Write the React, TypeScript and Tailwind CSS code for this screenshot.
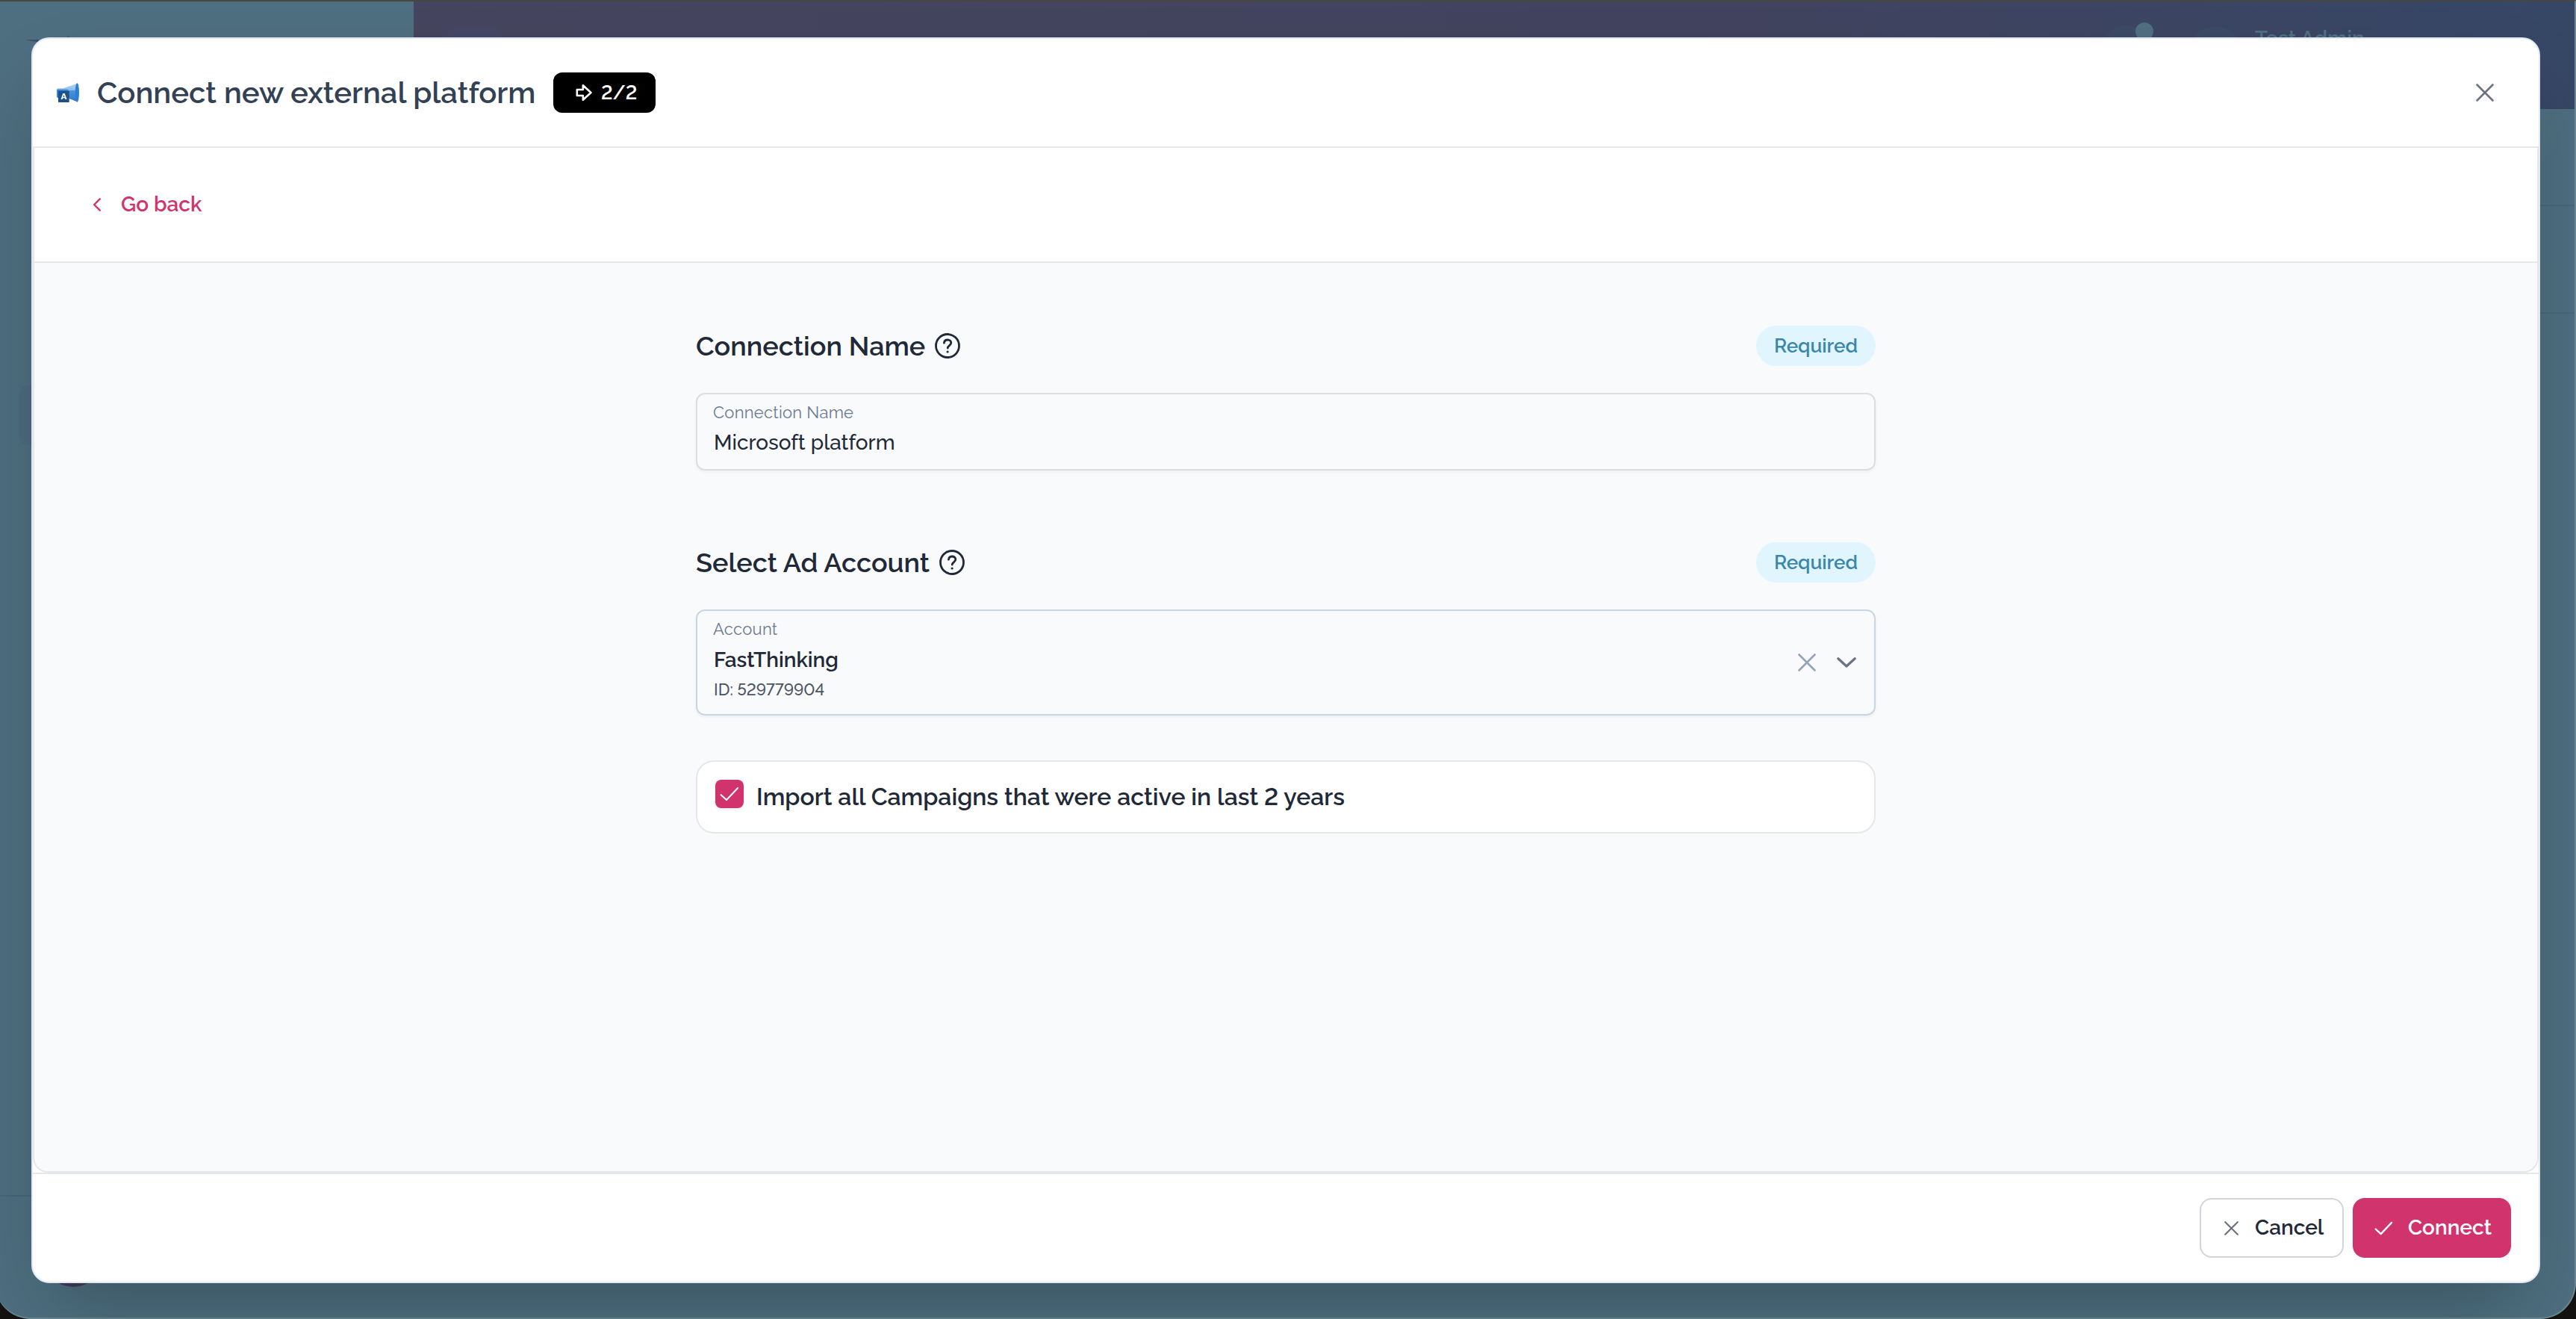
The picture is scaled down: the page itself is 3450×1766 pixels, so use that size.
import { useState, type ReactNode } from "react";

interface FieldHeaderProps {
  title: string;
}

interface IconProps {
  className?: string;
  strokeWidth?: number;
}

const CloseIcon = ({ className, strokeWidth = 2.8 }: IconProps) => (
  <svg viewBox="0 0 24 24" fill="none" className={className}>
    <path
      d="M1.5 1.5 22.5 22.5M22.5 1.5 1.5 22.5"
      stroke="currentColor"
      strokeWidth={strokeWidth}
      strokeLinecap="round"
    />
  </svg>
);

const CheckIcon = ({ className, strokeWidth = 2.4 }: IconProps) => (
  <svg viewBox="0 0 26 20" fill="none" className={className}>
    <path
      d="M1.6 11.2 9 18 24.2 2"
      stroke="currentColor"
      strokeWidth={strokeWidth}
      strokeLinecap="round"
      strokeLinejoin="round"
    />
  </svg>
);

const HelpIcon = () => (
  <svg viewBox="0 0 34 34" fill="none" className="w-[34px] h-[34px] shrink-0">
    <circle cx="17" cy="17" r="15.5" stroke="currentColor" strokeWidth="2.8" />
    <path
      d="M12.4 13.2c.3-2.6 2.2-4.2 4.7-4.2 2.7 0 4.7 1.7 4.7 4.1 0 3.3-4.6 3.6-4.6 7"
      stroke="currentColor"
      strokeWidth="2.8"
      strokeLinecap="round"
    />
    <circle cx="17.1" cy="25" r="1.6" fill="currentColor" />
  </svg>
);

const MegaphoneIcon = () => (
  <svg viewBox="0 0 90 78" className="w-[30px] h-[26px] shrink-0">
    <defs>
      <linearGradient id="cone" x1="0" y1="0" x2="0" y2="1">
        <stop offset="0" stopColor="#b5d6f3" />
        <stop offset="0.38" stopColor="#8bbcec" />
        <stop offset="0.4" stopColor="#4b93de" />
        <stop offset="1" stopColor="#2f78c6" />
      </linearGradient>
    </defs>
    <path d="M4 22h22L82 2v74L48 62 4 58a8 8 0 0 1-4-8V28a6 6 0 0 1 4-6z" fill="url(#cone)" />
    <path d="M2 26h44v34H4a6 6 0 0 1-4-6V30z" fill="#3a85d4" />
    <ellipse cx="82" cy="39" rx="8" ry="38" fill="#2f7fd0" />
    <rect x="6" y="32" width="44" height="46" rx="2" fill="#1f5189" />
    <text
      x="28"
      y="67"
      textAnchor="middle"
      fontSize="34"
      fontWeight="700"
      fill="#fff"
      className="font-['Open_Sans',sans-serif]"
    >
      A
    </text>
  </svg>
);

const FieldHeader = ({ title }: FieldHeaderProps) => (
  <div className="flex items-center justify-between h-[54px]">
    <div className="flex items-center gap-[13px] text-[#1f2937]">
      <h2 className="text-[36px] leading-[54px] font-semibold">{title}</h2>
      <HelpIcon />
    </div>
    <span className="w-[160px] h-[54px] rounded-full bg-[#e1f5fe] text-[#3a87ad] text-[26px] leading-[54px] font-semibold text-center">
      Required
    </span>
  </div>
);

const FieldLabel = ({ children }: { children: ReactNode }) => (
  <p className="text-[22px] leading-[28px] tracking-[0.25px] text-[#6b7a90]">
    {children}
  </p>
);

// dimmed application shell behind the dialog
const Backdrop = () => (
  <div className="absolute inset-y-0 -left-[7px] right-0 flex overflow-hidden rounded-b-[48px] bg-[#4e6f80] border-t-2 border-t-[#464642] border-r-2 border-r-[#70868f] border-b-2 border-b-[#6c8a92]">
    <div className="w-[561px] shrink-0 flex flex-col pl-[7px]">
      <svg viewBox="0 0 120 20" className="w-[120px] h-[20px] mt-[42px]">
        <path d="M32 9.3h20v3z" fill="#45455f" />
        <path
          d="M86 9l6-4M98 9l4-1M106 8l4-1M111 6l1 1M115 6l1 1"
          stroke="#41495f"
          strokeWidth="1.4"
        />
      </svg>
      <div className="ml-[26px] mt-[452px] w-[500px] h-[80px] rounded-[12px] bg-[#4d6a7d]" />
      <div className="mt-[1004px] h-[2px] bg-[#46667a]" />
      <div className="ml-[56px] mt-[37px] w-[84px] h-[84px] rounded-full bg-[#403c58]" />
    </div>
    <div className="flex-1">
      <div className="flex h-[144px] pl-[43px] bg-linear-to-r from-[#46455f] via-[#42445f] via-60% to-[#364766]">
        <div className="mt-[34px] w-[75px] h-[75px] rounded-[16px] bg-[#454865]" />
        <div className="relative ml-auto mt-[32px] w-[76px] h-[76px] rounded-full bg-[#3b4a66]">
          <span className="absolute left-[50px] -top-[4px] size-[24px] rounded-full bg-[#4e7080]" />
        </div>
        <div className="ml-[45px] mt-[33px] w-[72px] h-[76px] rounded-full bg-[#3b4a66]" />
        <p className="ml-[17px] mt-[30px] w-[428px] text-[28px] leading-[40px] font-semibold text-[#4e7080]">
          Test Admin
        </p>
      </div>
      <div className="mt-[128px] h-[2px] bg-[#48687a]" />
      <div className="mt-[142px] h-[2px] bg-[#48687a]" />
    </div>
  </div>
);

const App = () => {
  const [connectionName, setConnectionName] = useState("Microsoft platform");
  const [importAll, setImportAll] = useState(true);

  return (
    <div className="relative w-[3450px] h-[1766px] overflow-hidden bg-[#141312] font-[Raleway,Lato,sans-serif] lining-nums">
      <Backdrop />

      <div className="absolute left-[42px] top-[50px] w-[3360px] h-[1668px] flex flex-col overflow-hidden rounded-[24px] border-2 border-[#e2e8f0] bg-white shadow-[0_50px_100px_-24px_rgba(0,0,0,0.25)]">
        {/* header */}
        <div className="flex items-center h-[146px] shrink-0 pl-[32px] pr-[60px] border-b-2 border-[#e5e7eb]">
          <MegaphoneIcon />
          <h1 className="ml-[24px] w-[588px] text-[40px] leading-[60px] font-semibold text-[#334155] whitespace-nowrap">
            Connect new external platform
          </h1>
          <div className="ml-[23px] flex items-center w-[137px] h-[54px] rounded-[12px] bg-black pl-[30px] text-white">
            <svg viewBox="0 0 22 24" fill="none" className="w-[22px] h-[24px]">
              <path
                d="M1.8 8h8V2.2L20.4 12 9.8 21.8V16h-8z"
                stroke="currentColor"
                strokeWidth="2.6"
                strokeLinejoin="round"
              />
            </svg>
            <span className="ml-[12px] text-[26px] leading-[40px] font-semibold">
              2/2
            </span>
          </div>
          <button className="ml-auto text-[#6b7280]">
            <CloseIcon className="w-[24px] h-[24px]" strokeWidth={2.6} />
          </button>
        </div>

        {/* body */}
        <div className="flex-1 flex flex-col overflow-hidden rounded-b-[20px] border-x-2 border-b-2 border-[#e5e7eb] bg-[#f8fafc]">
          <div className="flex items-center h-[154px] shrink-0 pl-[78px] bg-white border-b-2 border-[#e5e7eb]">
            <button className="flex items-center gap-[26px] text-[#d1336d]">
              <svg viewBox="0 0 12 18" fill="none" className="w-[12px] h-[18px]">
                <path
                  d="M9.8 1.4 2.2 9l7.6 7.6"
                  stroke="currentColor"
                  strokeWidth="2.4"
                  strokeLinecap="round"
                  strokeLinejoin="round"
                />
              </svg>
              <span className="text-[28px] leading-[40px] font-semibold">
                Go back
              </span>
            </button>
          </div>

          <div className="w-[1580px] mx-auto pt-[84px]">
            <FieldHeader title="Connection Name" />
            <div className="mt-[36px] h-[104px] rounded-[12px] border-2 border-[#dfdcdf] px-[21px] pt-[10px] shadow-[0_2px_4px_rgba(0,0,0,0.05)]">
              <FieldLabel>Connection Name</FieldLabel>
              <input
                value={connectionName}
                onChange={(e) => setConnectionName(e.target.value)}
                className="block mt-[7px] ml-[1px] w-full h-[40px] text-[28px] font-medium text-[#1f2937] outline-none"
              />
            </div>

            <div className="mt-[96px]">
              <FieldHeader title="Select Ad Account" />
            </div>
            <div className="mt-[36px] flex items-center h-[142px] rounded-[12px] border-2 border-[#cbd5e1] pl-[21px] pr-[24px] shadow-[0_2px_4px_rgba(0,0,0,0.05)]">
              <div className="self-start pt-[10px]">
                <FieldLabel>Account</FieldLabel>
                <p className="mt-[8px] ml-[1px] text-[28px] leading-[40px] font-semibold text-[#1f2937]">
                  FastThinking
                </p>
                <p className="mt-[5px] ml-[1px] text-[22px] leading-[28px] font-medium text-[#4b5563]">
                  ID: 529779904
                </p>
              </div>
              <div className="ml-auto flex items-center gap-[28px]">
                <CloseIcon
                  className="w-[24px] h-[24px] text-[#94a3b8]"
                  strokeWidth={2.6}
                />
                <svg viewBox="0 0 26 14" fill="none" className="w-[26px] h-[14px] text-[#6b7280]">
                  <path
                    d="M1.8 1.8 13 12 24.2 1.8"
                    stroke="currentColor"
                    strokeWidth="3.2"
                    strokeLinecap="round"
                    strokeLinejoin="round"
                  />
                </svg>
              </div>
            </div>

            <div className="mt-[60px] flex items-center h-[98px] rounded-[24px] border-2 border-[#e5e7eb] bg-white pl-[24px]">
              <button
                onClick={() => setImportAll(!importAll)}
                className="flex items-center justify-center w-[38px] h-[38px] -mt-[8px] rounded-[8px] bg-[#d1336d] text-white shadow-[0_2px_4px_rgba(0,0,0,0.08)]"
              >
                {importAll && (
                  <CheckIcon className="w-[26px] h-[20px]" strokeWidth={2} />
                )}
              </button>
              <span className="ml-[17px] text-[32px] leading-[48px] font-semibold text-[#1f2937]">
                Import all Campaigns that were active in last 2 years
              </span>
            </div>
          </div>
        </div>

        {/* footer */}
        <div className="flex items-center justify-end gap-[12px] h-[146px] shrink-0 pr-[37px] border-t-2 border-[#e5e7eb]">
          <button className="flex items-center w-[193px] h-[80px] rounded-[16px] border-2 border-[#d1d5db] pl-[31px] text-[28px] leading-[40px] font-semibold text-[#1f2937]">
            <CloseIcon className="w-[19px] h-[19px] mr-[22px] text-[#6b7280]" />
            Cancel
          </button>
          <button className="flex items-center w-[212px] h-[80px] rounded-[16px] bg-[#d1336d] pl-[29px] text-[28px] leading-[40px] font-semibold text-white">
            <CheckIcon className="w-[25px] h-[19px] mr-[20px]" />
            Connect
          </button>
        </div>
      </div>
    </div>
  );
};

export default App;
